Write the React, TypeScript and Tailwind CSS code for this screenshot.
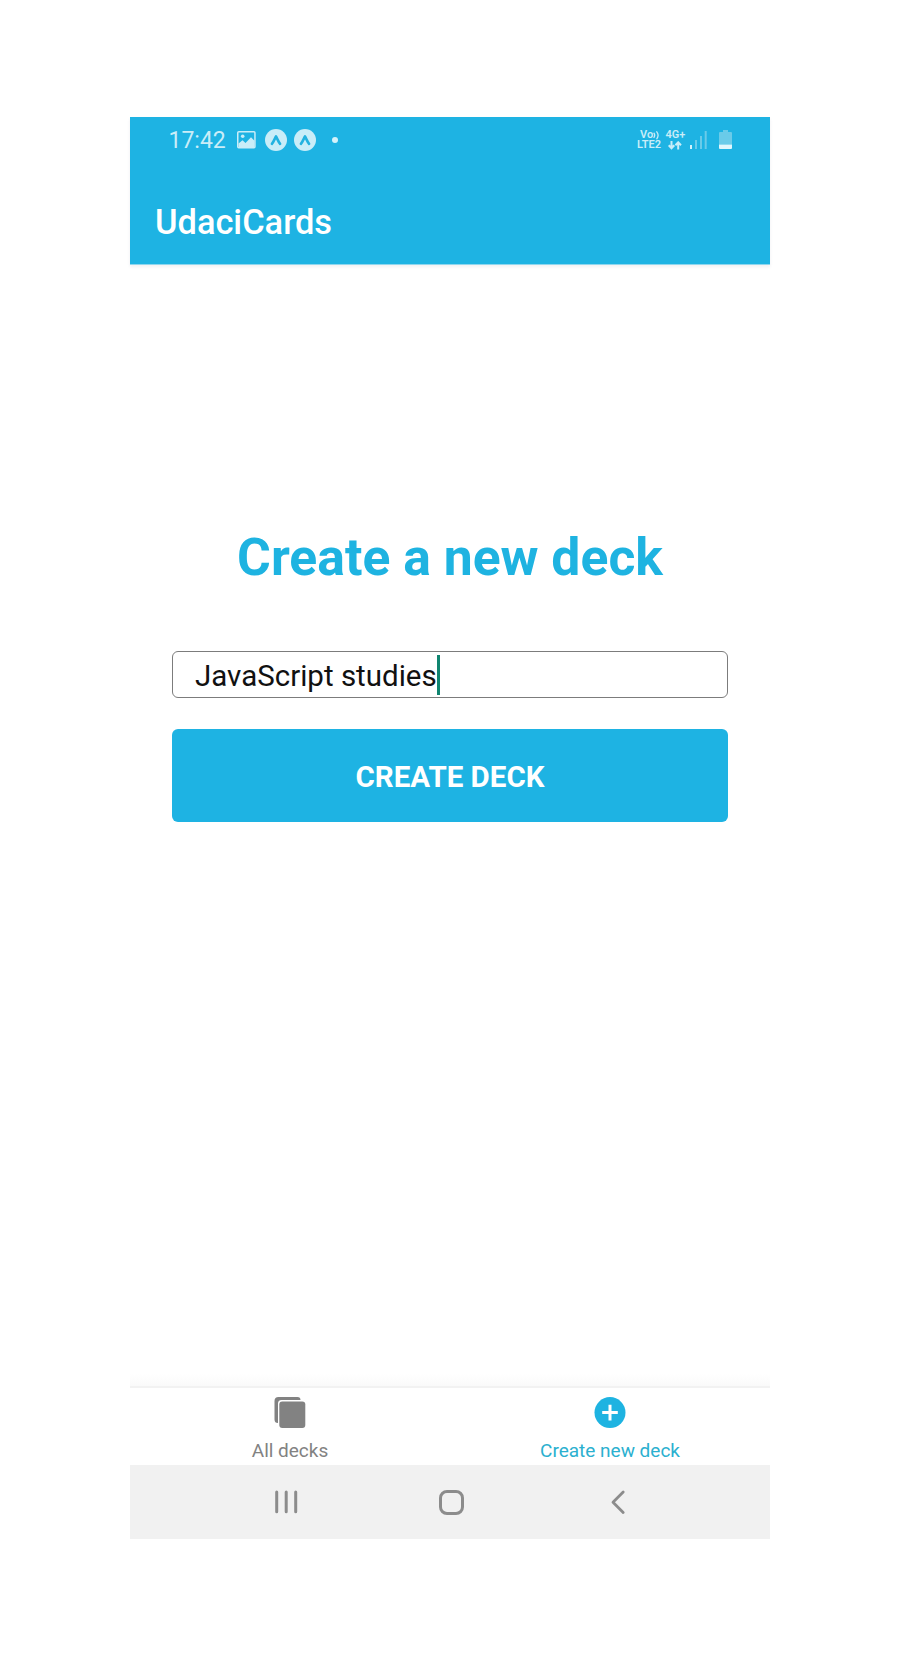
import React from "react";

function ExpoBadge() {
  return (
    <svg width="22" height="22" viewBox="0 0 22 22">
      <circle cx="11" cy="11" r="11" fill="#c9edf8" />
      <path d="M6.9 14.8 C8.7 12.8 9.6 10 11 7.4 C12.4 10 13.3 12.8 15.1 14.8" fill="none" stroke="#22b2e0" strokeWidth="2.6" strokeLinecap="round" strokeLinejoin="round" />
    </svg>
  );
}

function StatusBar() {
  return (
    <div className="flex h-[45px] items-center pr-[38px] pl-[38.5px] text-[#c9edf8]">
      <span className="w-[68.5px] pt-[2px] text-[23px] leading-none whitespace-nowrap">17:42</span>
      <svg width="19" height="18" viewBox="0 0 19 18">
        <rect x="0.75" y="0.75" width="17.2" height="16" rx="1" fill="none" stroke="currentColor" strokeWidth="1.5" />
        <circle cx="5.7" cy="5.2" r="1.8" fill="currentColor" />
        <path d="M1.5 12.5 L5.5 9.2 L8.5 12 L14 6.3 L17.5 9.7 V16.5 H1.5 Z" fill="currentColor" />
      </svg>
      <div className="ml-[8.5px] flex gap-[7.5px]">
        <ExpoBadge />
        <ExpoBadge />
      </div>
      <div className="ml-4 size-[6px] rounded-full bg-[#d5f2fa]" />
      <div className="ml-auto flex items-center">
        <div className="flex w-[28.5px] flex-col items-start pt-px text-[11px] leading-[10px] font-semibold whitespace-nowrap">
          <span className="flex pl-[3px]">
            Vo
            <svg width="7" height="10" viewBox="0 0 7 10" fill="none" stroke="currentColor" strokeWidth="1.3" strokeLinecap="round">
              <path d="M1 3.2 Q2.4 5.3 1 7.4 M3.8 1.8 Q6.4 5.3 3.8 8.8" />
            </svg>
          </span>
          <span>LTE2</span>
        </div>
        <div className="flex w-[24.5px] flex-col items-start pt-px text-[11px] leading-[10px] font-semibold">
          <span>4G+</span>
          <svg className="mt-px ml-0.5" width="14" height="9" viewBox="0 0 14 9" fill="none" stroke="currentColor" strokeWidth="2">
            <path d="M3.5 0 V7 M0.7 4.3 L3.5 7.2 L6.3 4.3 M10.2 8.5 V1.5 M7.4 4.2 L10.2 1.3 L13 4.2" />
          </svg>
        </div>
        <svg width="17" height="18" viewBox="0 0 17 18">
          <rect x="0" y="14" width="2" height="4" fill="#d5f2fa" />
          <g fill="#6acbe9">
            <rect x="5" y="9" width="2" height="9" />
            <rect x="10" y="5" width="2" height="13" />
            <rect x="14.7" y="0" width="2" height="18" />
          </g>
        </svg>
        <svg className="ml-3" width="13" height="20" viewBox="0 0 13 20">
          <path d="M4 0 H9 V2 H12 Q13 2 13 3 V14.5 H0 V3 Q0 2 1 2 H4 Z" fill="#6acbe9" />
          <path d="M0 14.5 H13 V18 Q13 19 12 19 H1 Q0 19 0 18 Z" fill="#e0f6fc" />
        </svg>
      </div>
    </div>
  );
}

function Tab({ label, active, children }: { label: string; active?: boolean; children: React.ReactNode }) {
  return (
    <div className={active ? "flex flex-1 flex-col items-center text-[#2bb0cf]" : "flex flex-1 flex-col items-center text-[#828282]"}>
      {children}
      <span className="mt-[11px] text-[19px] leading-[22px] whitespace-nowrap">{label}</span>
    </div>
  );
}

export default function App() {
  return (
    <div className="flex h-[1656px] w-[900px] justify-center bg-white pt-[117px] font-['Roboto',sans-serif]">
      <div className="flex h-[1422px] w-[640px] flex-col bg-white">
        <header className="flex h-[148px] flex-col border-b border-[#8fd6ee] bg-[#1eb3e3] shadow-[0_2px_3px_rgba(60,60,90,0.08)]">
          <StatusBar />
          <h1 className="mt-[40px] pl-[25px] text-[34.4px] leading-[40px] font-medium whitespace-nowrap text-white">UdaciCards</h1>
        </header>

        <main className="flex flex-1 flex-col items-center px-[42px]">
          <h2 className="mt-[263px] text-[51.7px] leading-[60px] font-bold whitespace-nowrap text-[#1eb3e1]">Create a new deck</h2>
          <div className="mt-[63px] flex h-[47px] w-full items-center rounded-[6px] border-[1.5px] border-[#7c7c7c] pl-[22px]">
            <span className="pt-0.5 text-[29.5px] leading-[40px] whitespace-nowrap text-[#111111]">JavaScript studies</span>
            <span className="h-[40px] w-[3px] bg-[#108570]" />
          </div>
          <button className="mt-[31px] h-[92.5px] w-full rounded-[6px] bg-[#1eb3e3] pt-1 text-[29.5px] font-bold whitespace-nowrap text-white">CREATE DECK</button>
        </main>

        <div className="h-3 bg-linear-to-b from-white to-[#fafafa]" />
        <nav className="flex h-[79px] border-t-2 border-[#f2f2f2] pt-[9px]">
          <Tab label="All decks">
            <svg width="32" height="32" viewBox="0 0 32 32" fill="#828282">
              <path d="M4.5 0 H23.5 Q26.5 0 26.5 3 H7.5 Q4 3 4 6.5 V26 Q0.5 26 0.5 22.5 V4 Q0.5 0 4.5 0 Z" />
              <rect x="5.3" y="4.5" width="26" height="26.5" rx="3" />
            </svg>
          </Tab>
          <Tab label="Create new deck" active>
            <svg width="32" height="32" viewBox="0 0 32 32">
              <circle cx="16" cy="15.6" r="15.5" fill="#1eb3e1" />
              <path d="M16 7.8 V23.4 M8.2 15.6 H23.8" stroke="white" strokeWidth="3" />
            </svg>
          </Tab>
        </nav>
        <div className="flex h-[74px] items-center bg-[#f1f1f1] pl-[144.5px]">
          <svg width="23" height="26" viewBox="0 0 23 26" fill="none" stroke="#8c8c8c" strokeWidth="3" strokeLinecap="round">
            <path d="M1.7 3 V22.8 M11.2 3 V22.8 M20.7 3 V22.8" />
          </svg>
          <svg className="ml-[140.5px]" width="27" height="27" viewBox="0 0 27 27" fill="none" stroke="#8c8c8c" strokeWidth="3">
            <rect x="2.5" y="2.5" width="22" height="22" rx="6.5" />
          </svg>
          <svg className="ml-[145px]" width="16" height="26" viewBox="0 0 16 26" fill="none" stroke="#8c8c8c" strokeWidth="2.8" strokeLinecap="round" strokeLinejoin="round">
            <path d="M13.2 3 L3 13.2 L13.2 23.5" />
          </svg>
        </div>
      </div>
    </div>
  );
}
